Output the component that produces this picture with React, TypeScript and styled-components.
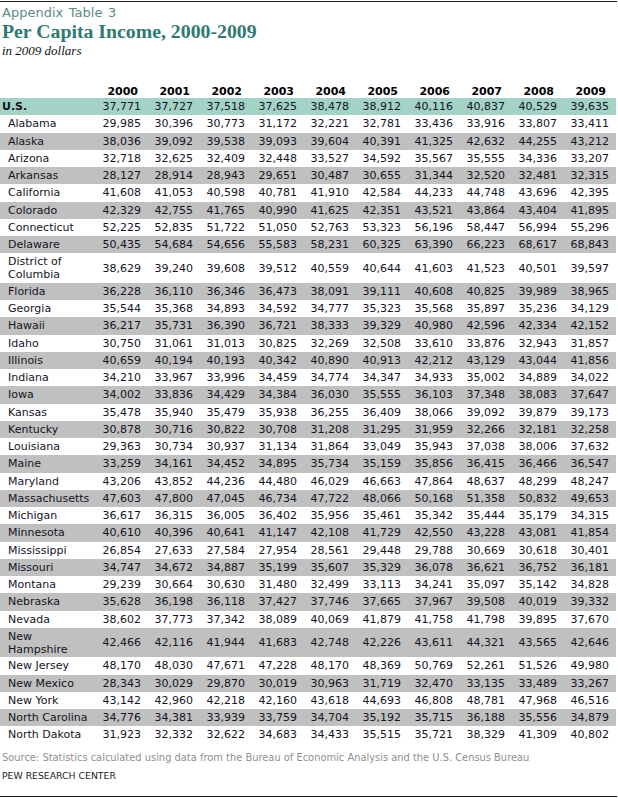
import React from "react";
import styled, { createGlobalStyle } from "styled-components";

const GlobalStyle = createGlobalStyle`
  html, body { margin: 0; padding: 0; background: #ffffff; }
  body { font-family: "DejaVu Sans", Verdana, sans-serif; }
`;

type RowData = { name: string; lines?: string[]; values: string[] };

const YEARS = ["2000", "2001", "2002", "2003", "2004", "2005", "2006", "2007", "2008", "2009"];

const US: RowData = {
  name: "U.S.",
  values: "37,771 37,727 37,518 37,625 38,478 38,912 40,116 40,837 40,529 39,635".split(" "),
};

const RAW = `Alabama|29,985 30,396 30,773 31,172 32,221 32,781 33,436 33,916 33,807 33,411
Alaska|38,036 39,092 39,538 39,093 39,604 40,391 41,325 42,632 44,255 43,212
Arizona|32,718 32,625 32,409 32,448 33,527 34,592 35,567 35,555 34,336 33,207
Arkansas|28,127 28,914 28,943 29,651 30,487 30,655 31,344 32,520 32,481 32,315
California|41,608 41,053 40,598 40,781 41,910 42,584 44,233 44,748 43,696 42,395
Colorado|42,329 42,755 41,765 40,990 41,625 42,351 43,521 43,864 43,404 41,895
Connecticut|52,225 52,835 51,722 51,050 52,763 53,323 56,196 58,447 56,994 55,296
Delaware|50,435 54,684 54,656 55,583 58,231 60,325 63,390 66,223 68,617 68,843
District of/Columbia|38,629 39,240 39,608 39,512 40,559 40,644 41,603 41,523 40,501 39,597
Florida|36,228 36,110 36,346 36,473 38,091 39,111 40,608 40,825 39,989 38,965
Georgia|35,544 35,368 34,893 34,592 34,777 35,323 35,568 35,897 35,236 34,129
Hawaii|36,217 35,731 36,390 36,721 38,333 39,329 40,980 42,596 42,334 42,152
Idaho|30,750 31,061 31,013 30,825 32,269 32,508 33,610 33,876 32,943 31,857
Illinois|40,659 40,194 40,193 40,342 40,890 40,913 42,212 43,129 43,044 41,856
Indiana|34,210 33,967 33,996 34,459 34,774 34,347 34,933 35,002 34,889 34,022
Iowa|34,002 33,836 34,429 34,384 36,030 35,555 36,103 37,348 38,083 37,647
Kansas|35,478 35,940 35,479 35,938 36,255 36,409 38,066 39,092 39,879 39,173
Kentucky|30,878 30,716 30,822 30,708 31,208 31,295 31,959 32,266 32,181 32,258
Louisiana|29,363 30,734 30,937 31,134 31,864 33,049 35,943 37,038 38,006 37,632
Maine|33,259 34,161 34,452 34,895 35,734 35,159 35,856 36,415 36,466 36,547
Maryland|43,206 43,852 44,236 44,480 46,029 46,663 47,864 48,637 48,299 48,247
Massachusetts|47,603 47,800 47,045 46,734 47,722 48,066 50,168 51,358 50,832 49,653
Michigan|36,617 36,315 36,005 36,402 35,956 35,461 35,342 35,444 35,179 34,315
Minnesota|40,610 40,396 40,641 41,147 42,108 41,729 42,550 43,228 43,081 41,854
Mississippi|26,854 27,633 27,584 27,954 28,561 29,448 29,788 30,669 30,618 30,401
Missouri|34,747 34,672 34,887 35,199 35,607 35,329 36,078 36,621 36,752 36,181
Montana|29,239 30,664 30,630 31,480 32,499 33,113 34,241 35,097 35,142 34,828
Nebraska|35,628 36,198 36,118 37,427 37,746 37,665 37,967 39,508 40,019 39,332
Nevada|38,602 37,773 37,342 38,089 40,069 41,879 41,758 41,798 39,895 37,670
New/Hampshire|42,466 42,116 41,944 41,683 42,748 42,226 43,611 44,321 43,565 42,646
New Jersey|48,170 48,030 47,671 47,228 48,170 48,369 50,769 52,261 51,526 49,980
New Mexico|28,343 30,029 29,870 30,019 30,963 31,719 32,470 33,135 33,489 33,267
New York|43,142 42,960 42,218 42,160 43,618 44,693 46,808 48,781 47,968 46,516
North Carolina|34,776 34,381 33,939 33,759 34,704 35,192 35,715 36,188 35,556 34,879
North Dakota|31,923 32,332 32,622 34,683 34,433 35,515 35,721 38,329 41,309 40,802`;

const STATES: RowData[] = RAW.split("\n").map((line) => {
  const [label, nums] = line.split("|");
  const lines = label.split("/");
  return { name: lines.join(" "), lines, values: nums.split(" ") };
});

type Tone = "us" | "gray" | "white";

const Page = styled.div`
  width: 618px;
  height: 798px;
  box-sizing: border-box;
  display: flex;
  flex-direction: column;
  color: #14141e;
`;

const Rule = styled.div`
  width: 617px;
  height: 1px;
  background: #1a1a1a;
  flex: none;
`;

const TopRule = styled(Rule)`
  margin-top: 1px;
`;

const Heading = styled.header`
  display: flex;
  flex-direction: column;
  padding-left: 2px;
`;

const Kicker = styled.div`
  font-family: "DejaVu Sans", Verdana, sans-serif;
  font-size: 13px;
  line-height: 15px;
  margin-top: 3px;
  color: #5b8b86;
  word-spacing: 1.5px;
`;

const Title = styled.h1`
  margin: 0;
  font-family: "Liberation Serif", Georgia, serif;
  font-weight: bold;
  font-size: 19.8px;
  line-height: 22px;
  color: #2f7a71;
`;

const Subtitle = styled.div`
  font-family: "Liberation Serif", Georgia, serif;
  font-style: italic;
  font-size: 13px;
  line-height: 16px;
  margin-top: 1px;
  color: #111;
`;

const Table = styled.div`
  display: flex;
  flex-direction: column;
  width: 616px;
  margin-top: 25px;
`;

const Row = styled.div<{ $tone: Tone; $tall?: boolean }>`
  display: grid;
  grid-template-columns: 89px repeat(10, 52px);
  padding-right: 7px;
  align-items: center;
  height: ${(p) => (p.$tall ? "29.5px" : "17.25px")};
  background: ${(p) =>
    p.$tone === "us" ? "#a3d2c7" : p.$tone === "gray" ? "#c0c0c0" : "#ffffff"};
`;

const HeadRow = styled.div`
  display: grid;
  grid-template-columns: 89px repeat(10, 52px);
  padding-right: 7px;
  height: 14px;
  align-items: end;
`;

const YearCell = styled.div`
  font-family: "DejaVu Sans", Verdana, sans-serif;
  font-weight: bold;
  font-size: 11px;
  line-height: 13px;
  text-align: right;
  padding-right: 3px;
  color: #000;
`;

const Label = styled.div<{ $strong?: boolean }>`
  font-family: "DejaVu Sans", Verdana, sans-serif;
  font-size: 11px;
  line-height: 13px;
  font-weight: ${(p) => (p.$strong ? "bold" : "normal")};
  padding-left: ${(p) => (p.$strong ? "2px" : "8px")};
  white-space: nowrap;
  color: #14141e;
`;

const Num = styled.div`
  font-family: "DejaVu Sans", Verdana, sans-serif;
  font-size: 11px;
  line-height: 13px;
  text-align: right;
  white-space: nowrap;
`;

const Footer = styled.footer`
  display: flex;
  flex-direction: column;
  padding-left: 2px;
  margin-top: 7px;
`;

const Source = styled.div`
  font-family: "DejaVu Sans", Tahoma, sans-serif;
  font-size: 9.9px;
  line-height: 14px;
  color: #8f8f8f;
`;

const Credit = styled.div`
  font-family: "DejaVu Sans", Tahoma, sans-serif;
  font-size: 9.3px;
  line-height: 12px;
  margin-top: 5px;
  color: #1c1c1c;
`;

const Spacer = styled.div`
  flex: 1;
`;

function DataRow({ row, tone, strong }: { row: RowData; tone: Tone; strong?: boolean }) {
  const lines = row.lines ?? [row.name];
  return (
    <Row $tone={tone} $tall={lines.length > 1}>
      <Label $strong={strong}>
        {lines.map((l, i) => (
          <React.Fragment key={i}>
            {i > 0 && <br />}
            {l}
          </React.Fragment>
        ))}
      </Label>
      {row.values.map((v, i) => (
        <Num key={i}>{v}</Num>
      ))}
    </Row>
  );
}

export default function App() {
  return (
    <>
      <GlobalStyle />
      <Page>
        <TopRule />
        <Heading>
          <Kicker>Appendix Table 3</Kicker>
          <Title>Per Capita Income, 2000-2009</Title>
          <Subtitle>in 2009 dollars</Subtitle>
        </Heading>
        <Table>
          <HeadRow>
            <div />
            {YEARS.map((y) => (
              <YearCell key={y}>{y}</YearCell>
            ))}
          </HeadRow>
          <DataRow row={US} tone="us" strong />
          {STATES.map((s, i) => (
            <DataRow key={s.name} row={s} tone={i % 2 === 1 ? "gray" : "white"} />
          ))}
        </Table>
        <Footer>
          <Source>
            Source: Statistics calculated using data from the Bureau of Economic Analysis and the U.S. Census Bureau
          </Source>
          <Credit>PEW RESEARCH CENTER</Credit>
        </Footer>
        <Spacer />
        <Rule />
        <div style={{ height: 1 }} />
      </Page>
    </>
  );
}
